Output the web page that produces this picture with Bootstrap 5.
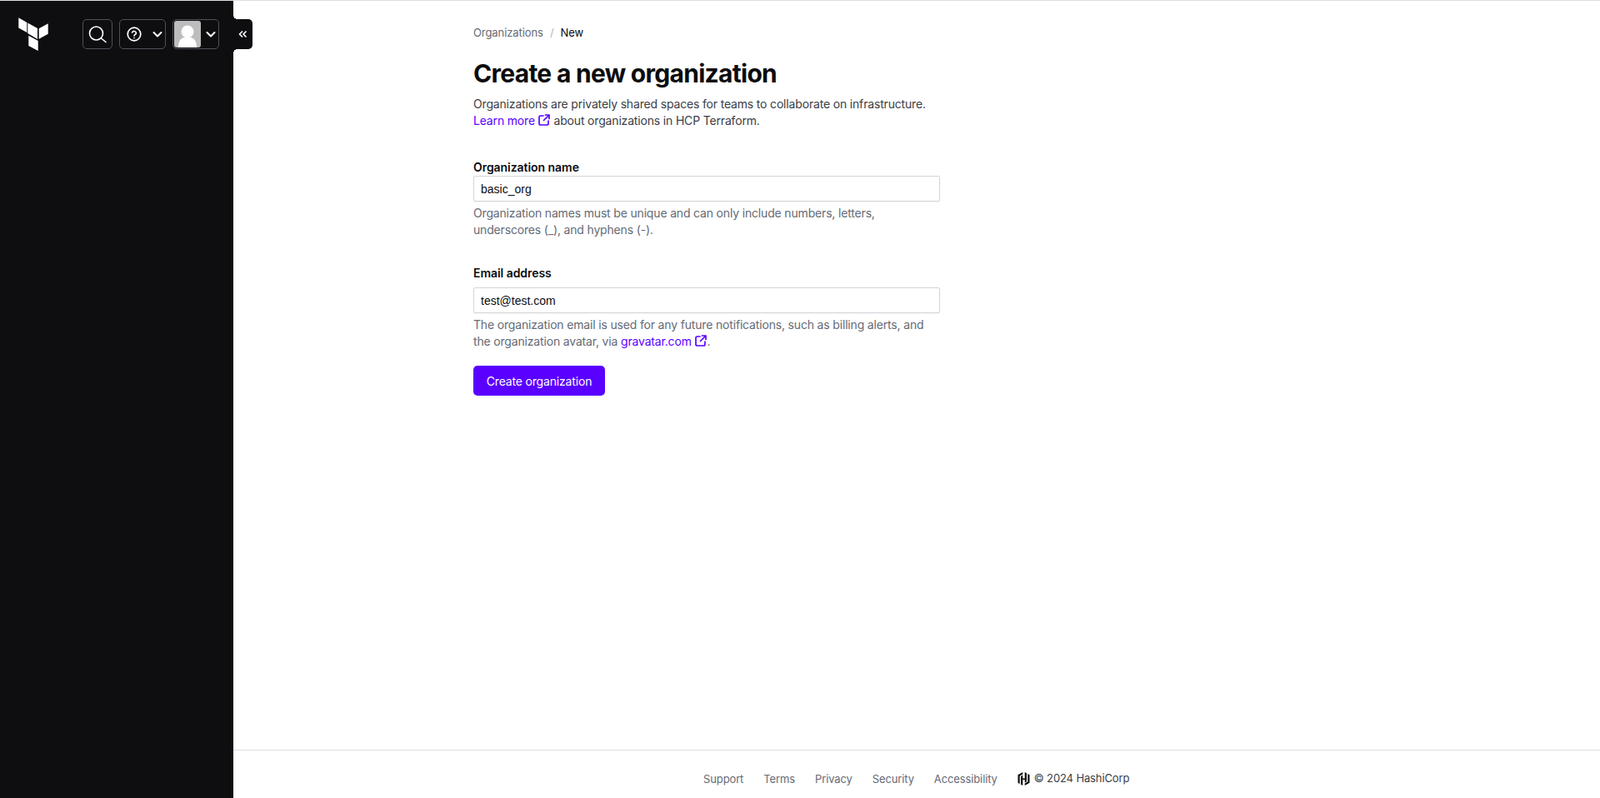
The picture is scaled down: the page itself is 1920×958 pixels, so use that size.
<!DOCTYPE html>
<html lang="en">
<head>
    <meta charset="UTF-8">
    <meta name="viewport" content="width=device-width, initial-scale=1.0">
    <title>New Organization</title>
    <link href="https://cdn.jsdelivr.net/npm/bootstrap@5.3.1/dist/css/bootstrap.min.css" rel="stylesheet">
    <style>
        html, body { height: 100%; }
        body { font-family: Inter, "Liberation Sans", sans-serif; font-size: 14px; line-height: 20px; letter-spacing: -0.17px; color: #3b3d45; border-top: 1px solid #dedfe3; }
        a { text-decoration: none; color: #5a00ff; }
        .app-shell { height: 957px; }
        .side-bar { width: 280px; background: #0e0e11; padding: 22px 0 0 22px; position: relative; flex: none; }
        .tf-logo { width: 36px; height: 40px; margin: -2px 41px 0 0; }
        .top-btn { height: 36px; border: 1px solid #4f5159; border-radius: 5px; background: transparent; color: #fff; padding: 0; }
        .search-btn { width: 36px; margin-right: 8px; }
        .help-btn { width: 56px; margin-right: 8px; padding-left: 8px; padding-right: 1px; }
        .user-btn { width: 56px; padding: 1px 1px 1px 1px; }
        .avatar-box { width: 32px; height: 32px; border-radius: 3px; background: #bdbdbd; overflow: hidden; }
        .collapse-tab { position: absolute; left: 280px; top: 22px; width: 23px; height: 36px; padding-right: 2px; background: #0e0e11; border-radius: 0 5px 5px 0; color: #fff; }
        .collapse-tab::before, .collapse-tab::after { content: ""; position: absolute; left: 0; width: 5px; height: 5px; }
        .collapse-tab::before { top: -5px; background: radial-gradient(circle at 100% 0, transparent 5px, #0e0e11 5px); }
        .collapse-tab::after { bottom: -5px; background: radial-gradient(circle at 100% 100%, transparent 5px, #0e0e11 5px); }
        .main-col { min-width: 0; }
        .form-area { padding: 28px 0 0 288px; width: 848px; }
        .crumb-row { font-size: 13px; letter-spacing: -0.08px; color: #656a76; margin-bottom: 20px; height: 20px; }
        .crumb-sep { color: #b2b6bd; margin: 0 8px; }
        .crumb-now { color: #0c0c0e; }
        .page-title { font-size: 30px; line-height: 38px; font-weight: 700; color: #0c0c0e; margin-bottom: 8px; letter-spacing: -0.72px; }
        .intro-text { margin-bottom: 36px; width: 560px; }
        .field-label { font-weight: 600; letter-spacing: -0.05px; color: #0c0c0e; margin-bottom: 0; display: block; line-height: 20px; }
        .email-label { margin-bottom: 7px; }
        .field-input { height: 31px; border: 1px solid #d2d4d9; border-radius: 2px; padding: 0 8px; font-size: 14px; letter-spacing: 0; color: #0c0c0e; font-family: "Liberation Sans", Arial, sans-serif; box-shadow: 0 1px 1px rgba(101,106,118,.05); }
        .help-line { color: #656a76; margin-top: 4px; }
        .email-group { margin-bottom: 19px; }
        .org-btn { background: #5a00ff; border: 0; border-radius: 5px; color: #fff; font-size: 14px; letter-spacing: -0.17px; width: 158px; height: 36px; padding: 0; }
        .ext-icon { width: 16px; height: 16px; vertical-align: -2px; margin-left: -1px; }
        .page-footer { border-top: 1px solid #dedfe3; height: 58px; padding-top: 11px; padding-left: 564px; font-size: 13px; letter-spacing: -0.12px; color: #656a76; margin-top: auto; }
        .foot-links { gap: 24px; }
        .foot-links a { color: #656a76; }
        .hc-logo { width: 15px; height: 16px; }
        .copy-text { color: #3b3d45; margin: 0 0 2px 5px; }
    </style>
</head>
<body>
    <div class="app-shell d-flex">
        <aside class="side-bar d-flex align-items-start">
            <svg class="tf-logo" viewBox="0 0 36 40" fill="#fff">
                <path d="M.3.3l10 5.700v12L.3 12.500zM11.300 6.500L23 13v13l-11.700-7zM24.700 13.300l11-6v12.400l-11 6zM12.300 21.700L23.700 28v12l-11.400-6z"/>
            </svg>
            <button class="top-btn search-btn d-flex align-items-center justify-content-center" type="button" aria-label="Search">
                <svg width="24" height="24" viewBox="0 0 24 24" fill="none" stroke="#fff" stroke-width="1.6" stroke-linecap="round"><circle cx="10.500" cy="11" r="8"/><path d="M16.500 17l5.500 4.500"/></svg>
            </button>
            <button class="top-btn help-btn d-flex align-items-center justify-content-between" type="button" aria-label="Help">
                <svg width="18" height="18" viewBox="0 0 18 18" fill="none" stroke="#fff" stroke-width="1.700" stroke-linecap="round"><circle cx="9" cy="9" r="7.800"/><path d="M6.600 7a2.500 2.500 0 0 1 4.800.7c0 1.500-2.400 1.900-2.400 3.300"/><path d="M9 13.500h.01"/></svg>
                <svg width="16" height="16" viewBox="0 0 16 16" fill="none" stroke="#fff" stroke-width="2" stroke-linecap="round" stroke-linejoin="round"><path d="M3.500 6l4.500 4.500L12.500 6"/></svg>
            </button>
            <button class="top-btn user-btn d-flex align-items-center justify-content-between" type="button" aria-label="User">
                <span class="avatar-box d-block">
                    <svg width="32" height="32" viewBox="0 0 32 32" fill="#fff" class="d-block"><circle cx="16" cy="13" r="7.500"/><path d="M5 32c0-7 2-10 6.500-12h9c4.500 2 6.500 5 6.500 12z"/></svg>
                </span>
                <svg width="16" height="16" viewBox="0 0 16 16" fill="none" stroke="#fff" stroke-width="2" stroke-linecap="round" stroke-linejoin="round"><path d="M3.500 6l4.500 4.500L12.500 6"/></svg>
            </button>
            <div class="collapse-tab d-flex align-items-center justify-content-center">
                <svg width="10" height="10" viewBox="0 0 10 10" fill="none" stroke="#fff" stroke-width="1.700" stroke-linecap="round" stroke-linejoin="round"><path d="M4.500 2L1.500 5l3 3M9 2L6 5l3 3"/></svg>
            </div>
        </aside>

        <div class="main-col d-flex flex-column flex-grow-1">
            <main class="form-area">
                <div class="crumb-row"><a href="#" class="text-reset">Organizations</a><span class="crumb-sep">/</span><span class="crumb-now">New</span></div>
                <h1 class="page-title">Create a new organization</h1>
                <p class="intro-text">Organizations are privately shared spaces for teams to collaborate on infrastructure.<br>
                    <a href="#">Learn more <svg class="ext-icon" viewBox="0 0 16 16" fill="none" stroke="#5a00ff" stroke-width="1.700" stroke-linecap="round" stroke-linejoin="round"><path d="M7 3H3.500A1.500 1.500 0 0 0 2 4.500v8A1.500 1.500 0 0 0 3.500 14h8a1.500 1.500 0 0 0 1.500-1.500V9"/><path d="M7.500 8.500L14 2M9.500 2H14v4.500"/></svg></a> about organizations in HCP Terraform.</p>
                <form>
                    <div class="mb-4 pb-2">
                        <label class="field-label" for="orgName">Organization name</label>
                        <input class="form-control field-input" id="orgName" type="text" value="basic_org">
                        <div class="help-line">Organization names must be unique and can only include numbers, letters,<br>underscores (_), and hyphens (-).</div>
                    </div>
                    <div class="email-group">
                        <label class="field-label email-label" for="orgEmail">Email address</label>
                        <input class="form-control field-input" id="orgEmail" type="text" value="test@test.com">
                        <div class="help-line">The organization email is used for any future notifications, such as billing alerts, and<br>the organization avatar, via <a href="#">gravatar.com <svg class="ext-icon" viewBox="0 0 16 16" fill="none" stroke="#5a00ff" stroke-width="1.700" stroke-linecap="round" stroke-linejoin="round"><path d="M7 3H3.500A1.500 1.500 0 0 0 2 4.500v8A1.500 1.500 0 0 0 3.500 14h8a1.500 1.500 0 0 0 1.500-1.500V9"/><path d="M7.500 8.500L14 2M9.500 2H14v4.500"/></svg></a>.</div>
                    </div>
                    <button type="button" class="btn org-btn">Create organization</button>
                </form>
            </main>
            <footer class="page-footer d-flex align-items-center">
                <div class="foot-links d-flex">
                    <a href="#">Support</a><a href="#">Terms</a><a href="#">Privacy</a><a href="#">Security</a><a href="#">Accessibility</a>
                </div>
                <div class="d-flex align-items-center ms-4">
                    <svg class="hc-logo" viewBox="0 0 14 16" fill="#0c0c0e"><path d="M5.800 0L0 3.300v9.400l2.200 1.300V4.600l3.600-2.100zM8.200 16l5.800-3.300V3.300L11.800 2v9.400l-3.600 2.100zM3.500 4.900l2.300-1.300v3.900h2.400V0l2.300 1.200v10l-2.300 1.200V8.900H5.800V16l-2.300-1.300z"/></svg>
                    <span class="copy-text">© 2024 HashiCorp</span>
                </div>
            </footer>
        </div>
    </div>
    <script src="https://cdn.jsdelivr.net/npm/bootstrap@5.3.1/dist/js/bootstrap.bundle.min.js"></script>
</body>
</html>
